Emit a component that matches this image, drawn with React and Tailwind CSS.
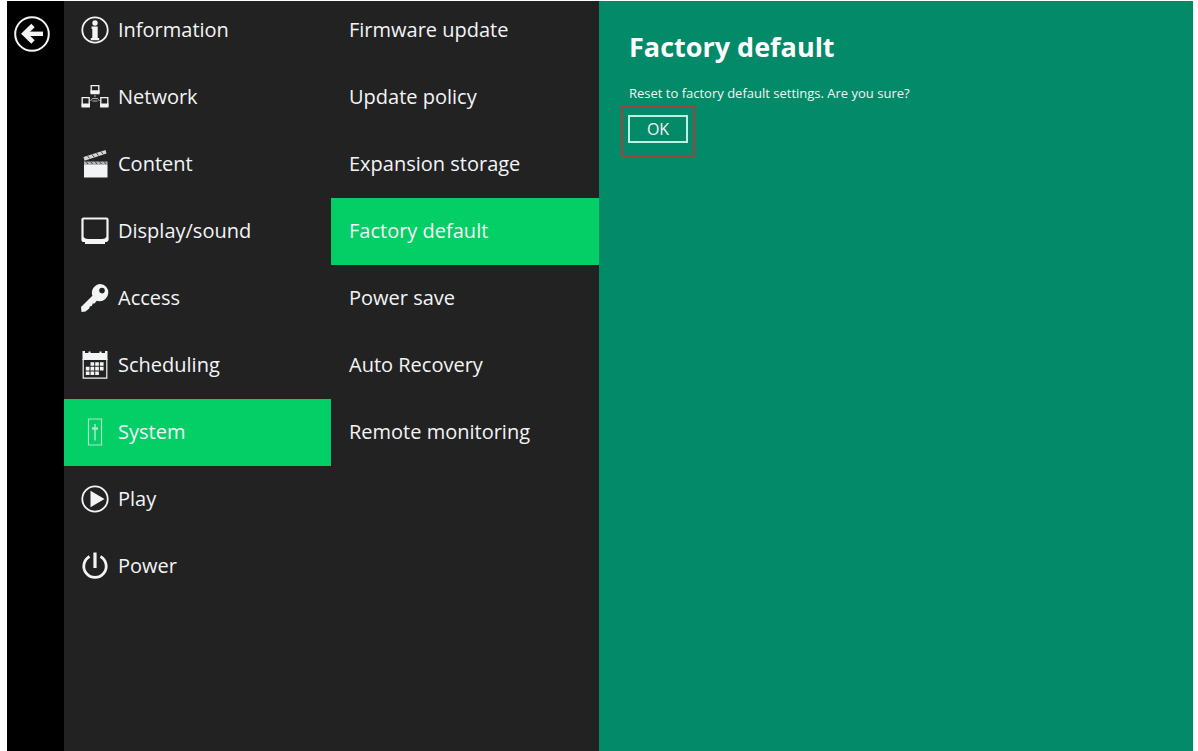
import React, { useState } from 'react';
import clsx from 'clsx';

const InfoIcon = () => (
  <svg viewBox="0 0 28 28" className="size-7" fill="currentColor" aria-hidden="true">
    <circle cx="14" cy="14" r="12.7" fill="none" stroke="currentColor" strokeWidth="1.8" />
    <circle cx="14" cy="7" r="2.7" />
    <path d="M10.5 10.5h6.2V22h1.5v2.2H9.8V22h1.5v-9.3h-.8z" />
  </svg>
);

const NetworkIcon = () => (
  <svg viewBox="0 0 28 28" className="size-7" fill="none" stroke="currentColor" aria-hidden="true">
    <path d="M10.2 2.6h7.6v7h-7.6zM1.2 14.6h7v8h-7zM19.8 14.6h7v8h-7z" strokeWidth="1.3" />
    <path d="M9.5 9.2h9M.5 22.4h8.4M19.1 22.4h8.4" strokeWidth="4" />
    <path d="M14 12v2M9.5 18l2-2.500h5l2 2.500M11.5 18h5" strokeWidth="1" opacity="0.7" />
  </svg>
);

const ContentIcon = () => (
  <svg viewBox="0 0 28 28" className="size-7" fill="currentColor" aria-hidden="true">
    <path d="M3 15h23.5v12.5H3z" />
    <path d="M3 11.5h23.5V15H3z" opacity="0.7" />
    <path d="M5 11.500l2 2.500M9.5 11.500l2 2.500M14 11.500l2 2.500M18.5 11.500l2 2.500M23 11.500l2 2.500" stroke="#222" strokeWidth="0.8" />
    <path d="M2.5 7l22-7 1 3.500-22 7.200z" opacity="0.85" />
    <path d="M6.5 5.8l2 2.600M11 4.400l2 2.600M15.500 3l2 2.600M20 1.500l2 2.600" stroke="#222" strokeWidth="0.8" />
  </svg>
);

const DisplayIcon = () => (
  <svg viewBox="0 0 28 28" className="size-7" aria-hidden="true">
    <path
      d="M2.5 1.5h23a1 1 0 0 1 1 1v20a1.5 1.5 0 0 1-1.5 1.5H3a1.5 1.5 0 0 1-1.5-1.5v-20a1 1 0 0 1 1-1z"
      fill="none"
      stroke="currentColor"
      strokeWidth="2.2"
    />
    <path d="M2 19.5q2 2.500 5 2.500h14q3 0 5-2.500v5l-2 .5v2H4v-2l-2-.5z" fill="currentColor" />
  </svg>
);

const KeyIcon = () => (
  <svg viewBox="0 0 28 28" className="size-7" aria-hidden="true">
    <path
      d="M19.2 0a8.6 8.6 0 1 1-1 17.2l-2.400-.4-2.300 2.600-1.800.2-.7 2.200-2.200.6-.6 2.200L4.500 27.500.5 28 0 23l11.400-11.200A8.800 8.800 0 0 1 19.200 0zM21 3.800a2.800 2.800 0 1 0 .01 5.600 2.800 2.800 0 0 0-.01-5.600z"
      fill="currentColor"
      fillRule="evenodd"
    />
  </svg>
);

const CalendarIcon = () => (
  <svg viewBox="0 0 28 28" className="size-7" fill="currentColor" aria-hidden="true">
    <path d="M1.500 0h2.500v2h3.500V.5h2V2h9V.5h2V2h3.500V0h2.500v9h-25z" />
    <path d="M2.200 8.500h23.600v18.700H2.200z" fill="none" stroke="currentColor" strokeWidth="1.2" />
    <path
      d="M9.5 13h14M4.800 17.600h18.700M4.800 22.200h14"
      fill="none"
      stroke="currentColor"
      strokeWidth="3.6"
      strokeDasharray="3.7 1"
    />
  </svg>
);

const SystemIcon = () => (
  <svg viewBox="0 0 28 28" className="size-7 opacity-70" fill="none" stroke="currentColor" aria-hidden="true">
    <path d="M7.5 1h13v26h-13z" strokeWidth="1.2" />
    <path d="M14 6v16.5" strokeWidth="1.5" />
    <path d="M11 10.5h6" strokeWidth="2.5" />
  </svg>
);

const PlayIcon = () => (
  <svg viewBox="0 0 28 28" className="size-7" aria-hidden="true">
    <circle cx="14" cy="14" r="12.7" fill="none" stroke="currentColor" strokeWidth="1.8" />
    <path d="M9.5 5.800v16.400L23.5 14z" fill="currentColor" />
  </svg>
);

const PowerIcon = () => (
  <svg viewBox="0 0 28 28" className="size-7" fill="none" stroke="currentColor" aria-hidden="true">
    <path d="M8.5 4.5a11.200 11.200 0 1 0 11 0" strokeWidth="2.8" />
    <path d="M14 .5V16" strokeWidth="3.2" />
  </svg>
);

const BackIcon = () => (
  <svg viewBox="0 0 36 36" className="size-9" fill="none" stroke="currentColor" aria-hidden="true">
    <circle cx="18" cy="18" r="16.8" strokeWidth="2" />
    <path d="M29 17.8H10" strokeWidth="4.4" />
    <path d="M19 9.5l-8.500 8.300L19 26" strokeWidth="4.8" />
  </svg>
);

const menuItems = [
  { name: 'Information', icon: InfoIcon },
  { name: 'Network', icon: NetworkIcon },
  { name: 'Content', icon: ContentIcon },
  { name: 'Display/sound', icon: DisplayIcon },
  { name: 'Access', icon: KeyIcon },
  { name: 'Scheduling', icon: CalendarIcon },
  { name: 'System', icon: SystemIcon },
  { name: 'Play', icon: PlayIcon },
  { name: 'Power', icon: PowerIcon },
];

const systemItems = [
  'Firmware update',
  'Update policy',
  'Expansion storage',
  'Factory default',
  'Power save',
  'Auto Recovery',
  'Remote monitoring',
];

function MenuButton({ active, className, children, onClick }) {
  return (
    <button
      type="button"
      onClick={onClick}
      aria-current={active ? 'page' : undefined}
      className={clsx(
        'flex h-[67px] w-full items-center gap-[9px] pb-0.5 text-left text-xl text-gray-100',
        active && 'bg-[#04cf66]',
        className
      )}
    >
      {children}
    </button>
  );
}

export default function App() {
  const [section, setSection] = useState('System');
  const [page, setPage] = useState('Factory default');

  return (
    <div className="min-h-screen bg-white pt-px pr-[5px] pl-[7px] font-['Open_Sans',sans-serif]">
      <div className="flex min-h-[calc(100vh-1px)] overflow-hidden bg-[#222222]">
        <div className="w-[57px] shrink-0 bg-black px-[7px] pt-[15px] text-gray-100">
          <button type="button" aria-label="Back" className="block">
            <BackIcon />
          </button>
        </div>

        {/* the lists are scrolled slightly past the top edge */}
        <nav aria-label="Settings" className="-mt-1 w-[45%] max-w-[267px]">
          {menuItems.map(({ name, icon: Icon }) => (
            <MenuButton
              key={name}
              active={name === section}
              className="pl-[17px]"
              onClick={() => setSection(name)}
            >
              <Icon />
              <span>{name}</span>
            </MenuButton>
          ))}
        </nav>

        <nav aria-label="System" className="-mt-1 w-[45%] max-w-[268px]">
          {systemItems.map((name) => (
            <MenuButton
              key={name}
              active={name === page}
              className="pl-[18px]"
              onClick={() => setPage(name)}
            >
              <span>{name}</span>
            </MenuButton>
          ))}
        </nav>

        <main className="flex-1 bg-[#038a68] pt-7 pl-[30px] text-white">
          <h1 className="text-[27px] leading-9 font-bold">Factory default</h1>
          <p className="mt-4 text-[13px] leading-6 text-gray-100">
            Reset to factory default settings. Are you sure?
          </p>
          <div className="-ml-2 inline-block border-2 border-[#a0443f] px-[5px] pt-2 pb-3">
            <button
              type="button"
              className="flex h-7 w-[60px] items-center justify-center border-2 border-[#b9f3e2] text-base text-gray-100"
            >
              OK
            </button>
          </div>
        </main>
      </div>
    </div>
  );
}
